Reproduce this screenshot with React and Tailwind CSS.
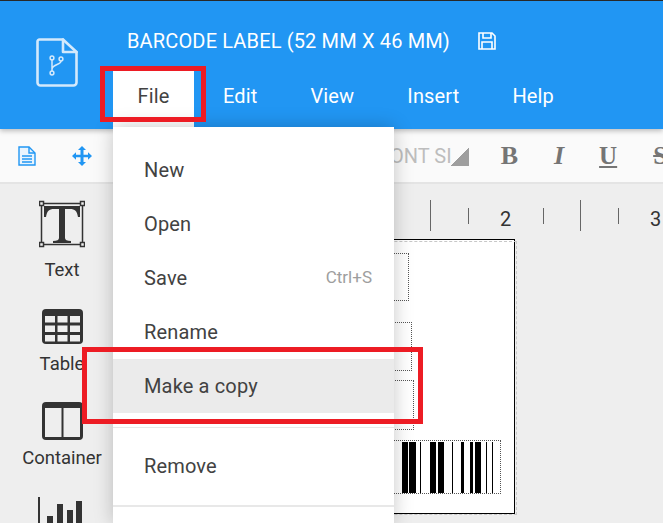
import React from "react";

const FileIcon = () => (
  <svg width="42" height="49" viewBox="0 0 42 49" fill="none" stroke="#d3e9fc" strokeWidth="2.6" strokeLinejoin="round" strokeLinecap="round">
    <path d="M3.5 1.5 H27 L40.5 14 V44.5 a3 3 0 0 1 -3 3 H4.5 a3 3 0 0 1 -3 -3 V3.5 a2 2 0 0 1 2 -2 Z" />
    <path d="M27 1.5 V14 H40.5" />
    <g strokeWidth="1.5">
      <circle cx="16" cy="20" r="1.9" />
      <circle cx="16" cy="35" r="1.9" />
      <circle cx="25" cy="21" r="1.9" />
      <path d="M16 22 V33 M25 23 C25 27 17 26 16 31" />
    </g>
  </svg>
);

const SaveIcon = () => (
  <svg width="18" height="18" viewBox="0 0 18 18" fill="none" stroke="#fff" strokeWidth="1.6">
    <path d="M1 1 H14 L17 4 V17 H1 Z" />
    <path d="M5 1 V6 H13 V1 M4 17 V10 H14 V17" />
  </svg>
);

const DocIcon = () => (
  <svg width="18" height="20" viewBox="0 0 18 20" fill="none" stroke="#2196f3" strokeWidth="1.4">
    <path d="M1 1 H11 L17 7 V19 H1 Z" fill="#e8f4fe" />
    <path d="M11 1 V7 H17" />
    <path d="M4 10 H14 M4 13 H14 M4 16 H14" strokeWidth="1.6" />
  </svg>
);

const MoveIcon = () => (
  <svg width="20" height="20" viewBox="0 0 20 22" preserveAspectRatio="none" fill="#2196f3">
    <path d="M10 0 L14 4.5 H11.5 V9.5 H16 V7 L20 11 L16 15 V12.5 H11.5 V17.5 H14 L10 22 L6 17.5 H8.5 V12.5 H4 V15 L0 11 L4 7 V9.5 H8.5 V4.5 H6 Z" />
  </svg>
);

const TextIcon = () => (
  <svg width="46" height="48" viewBox="0 0 46 48" fill="none">
    <rect x="2.5" y="3.5" width="41" height="41" stroke="#333" strokeWidth="1.5" />
    <path d="M5 6 H41 V17 H39 C38 11 36 9 31 9 H26 V38 C26 40 28 41 32 41 V43 H14 V41 C18 41 20 40 20 38 V9 H15 C10 9 8 11 7 17 H5 Z" fill="#333" />
    {[[2.5, 3.5], [43.5, 3.5], [2.5, 44.5], [43.5, 44.5]].map(([x, y]) => (
      <rect key={`${x}-${y}`} x={x - 2} y={y - 2} width="4" height="4" fill="#eee" stroke="#333" strokeWidth="1.5" />
    ))}
  </svg>
);

const TableIcon = () => (
  <svg width="41" height="35" viewBox="0 0 41 35">
    <rect width="41" height="35" rx="4" fill="#333" />
    {[7, 16.5, 26].map((y) =>
      [3, 15.5, 28].map((x) => (
        <rect key={`${x}-${y}`} x={x} y={y} width="10" height="6.5" fill="#eee" />
      ))
    )}
  </svg>
);

const ContainerIcon = () => (
  <svg width="41" height="38" viewBox="0 0 41 38">
    <rect width="41" height="38" rx="4" fill="#333" />
    <rect x="3" y="6" width="16.5" height="29" fill="#eee" />
    <rect x="21.5" y="6" width="16.5" height="29" fill="#eee" />
  </svg>
);

const ChartIcon = () => (
  <svg width="45" height="27" viewBox="0 0 45 27" fill="#333">
    <rect x="0" y="0" width="2" height="27" />
    <rect x="9" y="19" width="6" height="8" />
    <rect x="19" y="7" width="6" height="20" />
    <rect x="29" y="13" width="6" height="14" />
    <rect x="38" y="4" width="6" height="23" />
  </svg>
);

const bars = [
  [402, 6], [409, 7], [420, 1], [430, 6], [438, 6], [452, 1], [461, 3], [470, 3], [475, 6], [486, 1], [492, 1],
];

const Item = ({ label, hint, active }) => (
  <div className={`flex h-[54px] items-center justify-between pl-[31px] pr-[22px] ${active ? "bg-[#ebebeb]" : ""}`}>
    <span>{label}</span>
    {hint && <span className="text-[17px] tracking-normal text-[#9e9e9e]">{hint}</span>}
  </div>
);

export default function App() {
  return (
    <div className="relative h-[523px] w-[663px] overflow-hidden bg-[#eeeeee] font-['Roboto',sans-serif]">
      <div className="h-px bg-[#2a2a2a]" />
      <header className="relative z-10 flex h-[128px] bg-[#2196f3] text-white shadow-[0_2px_5px_rgba(0,0,0,0.25)]">
        <div className="flex w-[113px] shrink-0 items-center justify-center pb-[5px]">
          <FileIcon />
        </div>
        <div className="flex flex-col">
          <div className="flex h-[70px] items-center gap-[28px] pl-[14px] pt-[10px] text-[20px] tracking-[0.15px]">
            <span>BARCODE LABEL (52 MM X 46 MM)</span>
            <SaveIcon />
          </div>
          <nav className="flex h-[56px] items-center text-[20px] leading-none tracking-[0.15px]">
            <span className="flex h-full w-[81px] items-center justify-center bg-white pb-[6px] text-[#424242]">File</span>
            <span className="ml-[29px] pb-[6px]">Edit</span>
            <span className="ml-[53px] pb-[6px]">View</span>
            <span className="ml-[53px] pb-[6px]">Insert</span>
            <span className="ml-[53px] pb-[6px]">Help</span>
          </nav>
        </div>
      </header>

      <div className="flex h-[55px] items-center whitespace-nowrap border-b-2 border-[#e4e4e4] bg-[#fafafa]">
        <div className="ml-[18px] flex shrink-0 items-center"><DocIcon /></div>
        <div className="ml-[36px] flex shrink-0 items-center"><MoveIcon /></div>
        <span className="ml-[287px] shrink-0 pt-[1px] text-[20px] text-[#bdbdbd]">FONT SI</span>
        <div className="ml-[-2px] mt-[2px] h-[19px] w-[19px] shrink-0 bg-[linear-gradient(135deg,transparent_50%,#9e9e9e_50%)]" />
        <span className="ml-[32px] shrink-0 font-['Liberation_Serif',serif] text-[26px] font-bold text-[#757575]">B</span>
        <span className="ml-[36px] shrink-0 font-['Liberation_Serif',serif] text-[26px] font-bold italic text-[#757575]">I</span>
        <span className="ml-[35px] shrink-0 font-['Liberation_Serif',serif] text-[25px] font-bold text-[#757575] underline underline-offset-2">U</span>
        <span className="ml-[36px] shrink-0 font-['Liberation_Serif',serif] text-[25px] font-bold text-[#757575] line-through">S</span>
      </div>

      <main className="relative -mt-px flex text-[#333]">
        <aside className="flex w-[125px] shrink-0 flex-col items-center pr-[1px] text-[18.5px] leading-none">
          <div className="mt-[17px]"><TextIcon /></div>
          <span className="mt-[13px]">Text</span>
          <div className="mt-[29px]"><TableIcon /></div>
          <span className="mt-[11px]">Table</span>
          <div className="mt-[29px]"><ContainerIcon /></div>
          <span className="mt-[9px]">Container</span>
          <div className="mt-[29px] ml-[-3px]"><ChartIcon /></div>
        </aside>

        {/* free canvas: ruler and label sheet */}
        <div className="relative flex-1">
          {[430, 580].map((x) => (
            <div key={x} className="absolute top-[17px] h-[31px] w-px bg-[#666]" style={{ left: x - 125 }} />
          ))}
          {[468, 543, 618].map((x) => (
            <div key={x} className="absolute top-[25px] h-[16px] w-px bg-[#666]" style={{ left: x - 125 }} />
          ))}
          <span className="absolute left-[375px] top-[26px] text-[20px] leading-none">2</span>
          <span className="absolute left-[525px] top-[26px] text-[20px] leading-none">3</span>

          <div className="absolute left-[95px] top-[56px] h-[275px] w-[295px] border border-black bg-white" />
          <div className="absolute left-[95px] top-[58px] h-[274px] w-[297px] border border-dashed border-[#c8c8c8]" />
          <div className="absolute left-[180px] top-[70px] h-[48px] w-[104px] border border-dotted border-[#555]" />
          <div className="absolute left-[180px] top-[139px] h-[49px] w-[107px] border border-dotted border-[#555]" />
          <div className="absolute left-[180px] top-[197px] h-[50px] w-[109px] border border-dotted border-[#555]" />
          <div className="absolute left-[180px] top-[257px] h-[54px] w-[196px] border border-dotted border-[#555]" />
          {bars.map(([x, w]) => (
            <div key={x} className="absolute top-[259px] h-[51px] bg-black" style={{ left: x - 125, width: w }} />
          ))}
        </div>
      </main>

      {/* open File menu */}
      <div className="absolute left-[113px] top-[127px] z-20 h-[396px] w-[281px] bg-white text-[20px] tracking-[0.15px] text-[#424242] shadow-[0_0_18px_rgba(0,0,0,0.22)]">
        <div className="pt-[16px]">
          <Item label="New" />
          <Item label="Open" />
          <Item label="Save" hint="Ctrl+S" />
          <Item label="Rename" />
          <Item label="Make a copy" active />
        </div>
        <div className="mt-[14px] h-px bg-[#e8e8e8]" />
        <div className="pt-[11px]">
          <Item label="Remove" />
        </div>
        <div className="mt-[12px] h-[2px] bg-[#e8e8e8]" />
      </div>

      {/* red annotation boxes */}
      <div className="absolute left-[100px] top-[66px] z-30 h-[56px] w-[106px] border-[5px] border-[#ed1c24]" />
      <div className="absolute left-[82px] top-[347px] z-30 h-[77px] w-[341px] border-[5px] border-[#ed1c24]" />
    </div>
  );
}
